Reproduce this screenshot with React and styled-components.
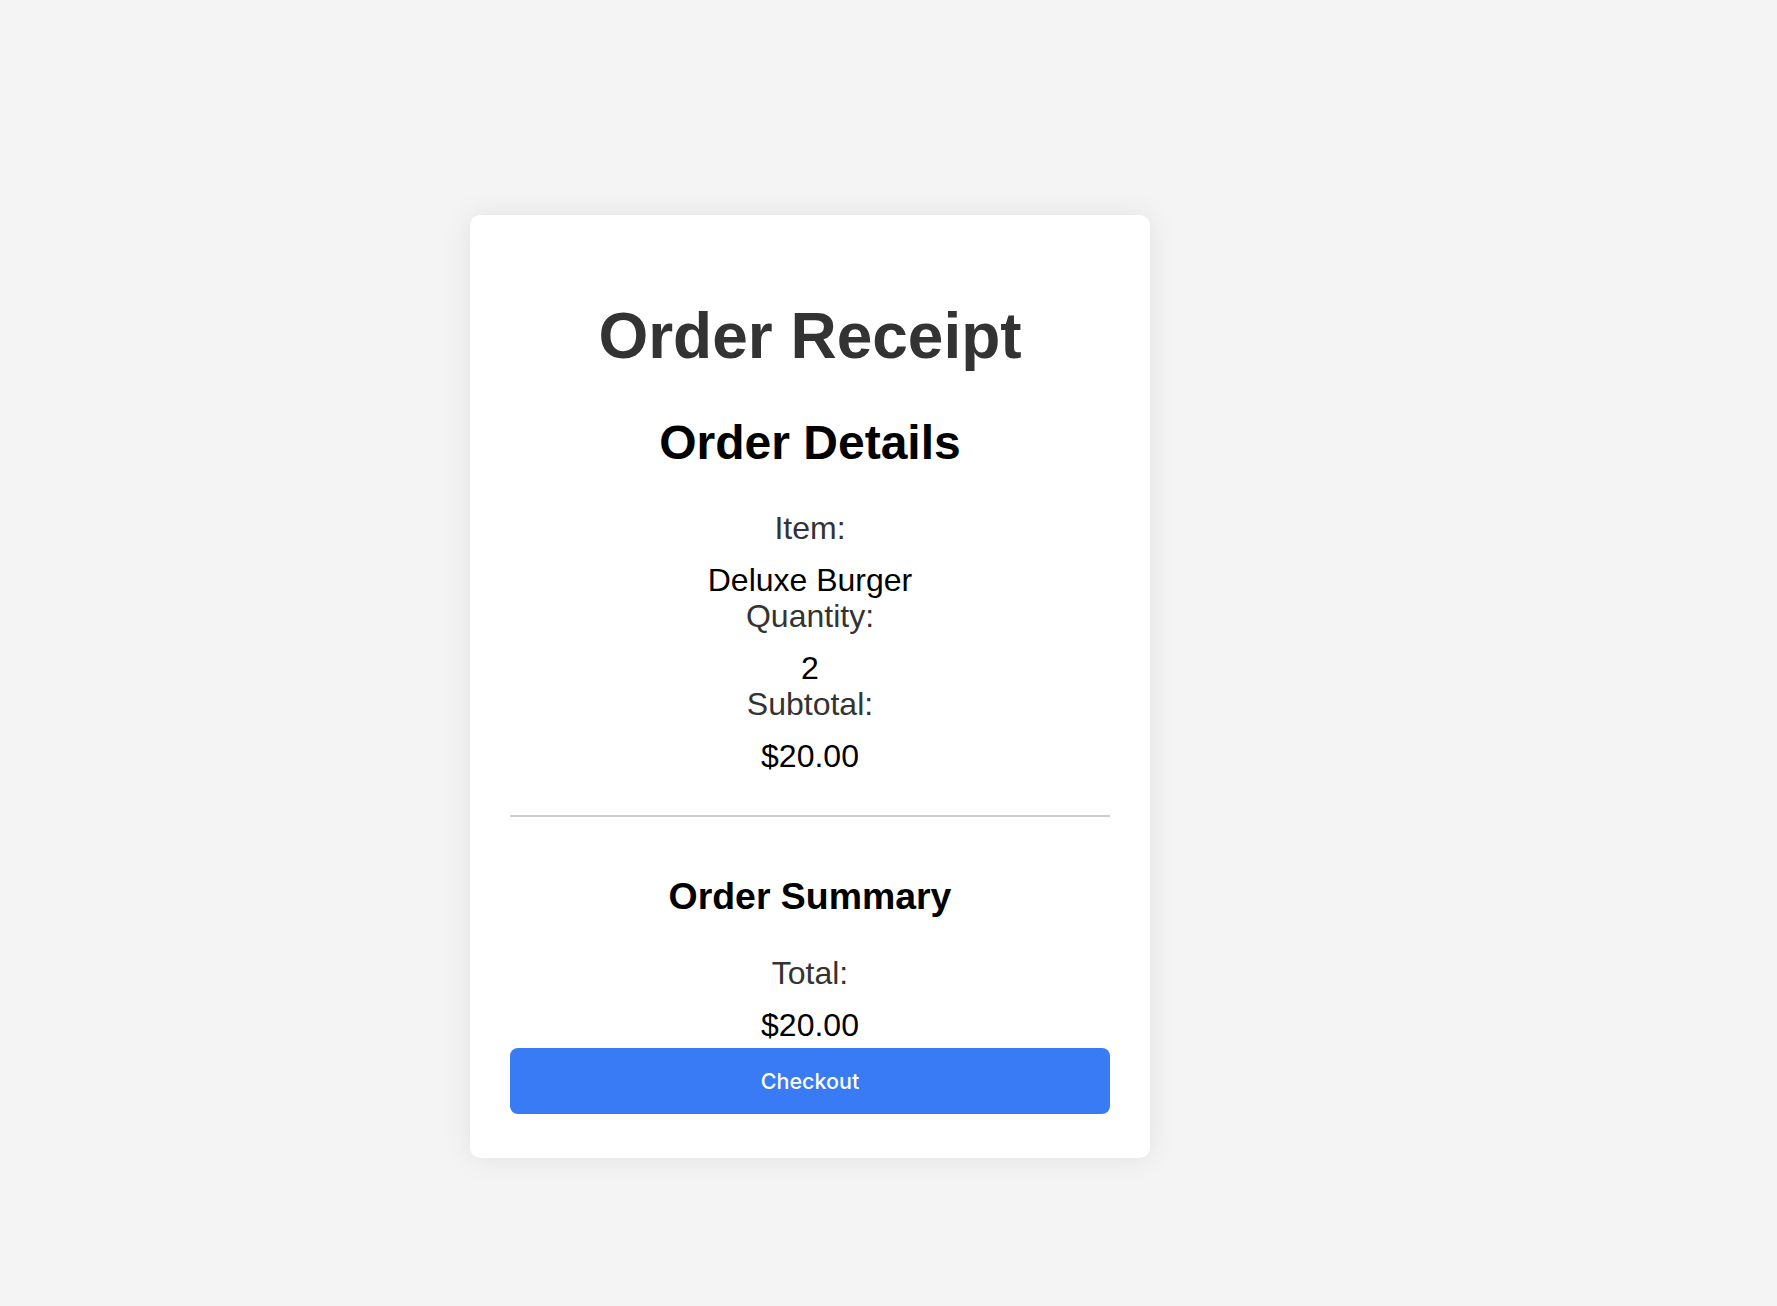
import React from "react";
import styled, { createGlobalStyle } from "styled-components";

const GlobalStyle = createGlobalStyle`
  html, body {
    margin: 0;
    padding: 0;
    background-color: #f4f4f4;
    font-family: "Liberation Sans", Arial, sans-serif;
  }
`;

const Page = styled.div`
  min-height: 100vh;
  box-sizing: border-box;
  padding: 215px 0 0 470px;
`;

const Card = styled.div`
  width: 680px;
  box-sizing: border-box;
  padding: 40px 40px 44px;
  background-color: #fff;
  border-radius: 10px;
  box-shadow: 0 0 30px rgba(0, 0, 0, 0.08);
  text-align: center;
`;

const Title = styled.h1`
  margin: 45px 0 0;
  font-size: 64px;
  line-height: 72px;
  font-weight: 700;
  color: #333;
`;

const SectionTitle = styled.h2`
  margin: ${(p) => (p.small ? "0" : "44px 0 0")};
  font-size: ${(p) => (p.small ? "37.44px" : "48px")};
  line-height: ${(p) => (p.small ? "42px" : "54px")};
  font-weight: 700;
  color: #000;
`;

const Details = styled.div`
  margin-top: ${(p) => p.top}px;
`;

const Label = styled.div`
  font-size: 32px;
  line-height: 36px;
  color: #333;
  margin-bottom: 16px;
`;

const Value = styled.div`
  font-size: 32px;
  line-height: 36px;
  color: #000;
`;

const Divider = styled.hr`
  margin: 41px 0 0;
  border: 0;
  height: 2px;
  background-color: #cccccc;
`;

const Summary = styled.div`
  padding-top: 58px;
`;

const CheckoutButton = styled.button`
  display: flex;
  align-items: center;
  justify-content: center;
  width: 100%;
  height: 66px;
  margin-top: 5px;
  border: 0;
  border-radius: 8px;
  background-color: #387bf4;
  color: #fff;
  font-family: Inter, "Liberation Sans", sans-serif;
  font-size: 21.5px;
  font-weight: 500;
  cursor: pointer;
`;

const items = [
  { label: "Item:", value: "Deluxe Burger" },
  { label: "Quantity:", value: "2" },
  { label: "Subtotal:", value: "$20.00" },
];

export default function App() {
  return (
    <>
      <GlobalStyle />
      <Page>
        <Card>
          <Title>Order Receipt</Title>
          <SectionTitle>Order Details</SectionTitle>
          <Details top={40}>
            {items.map((it) => (
              <div key={it.label}>
                <Label>{it.label}</Label>
                <Value>{it.value}</Value>
              </div>
            ))}
          </Details>
          <Divider />
          <Summary>
            <SectionTitle as="h3" small>
              Order Summary
            </SectionTitle>
            <Details top={38}>
              <Label>Total:</Label>
              <Value>$20.00</Value>
            </Details>
            <CheckoutButton>Checkout</CheckoutButton>
          </Summary>
        </Card>
      </Page>
    </>
  );
}
